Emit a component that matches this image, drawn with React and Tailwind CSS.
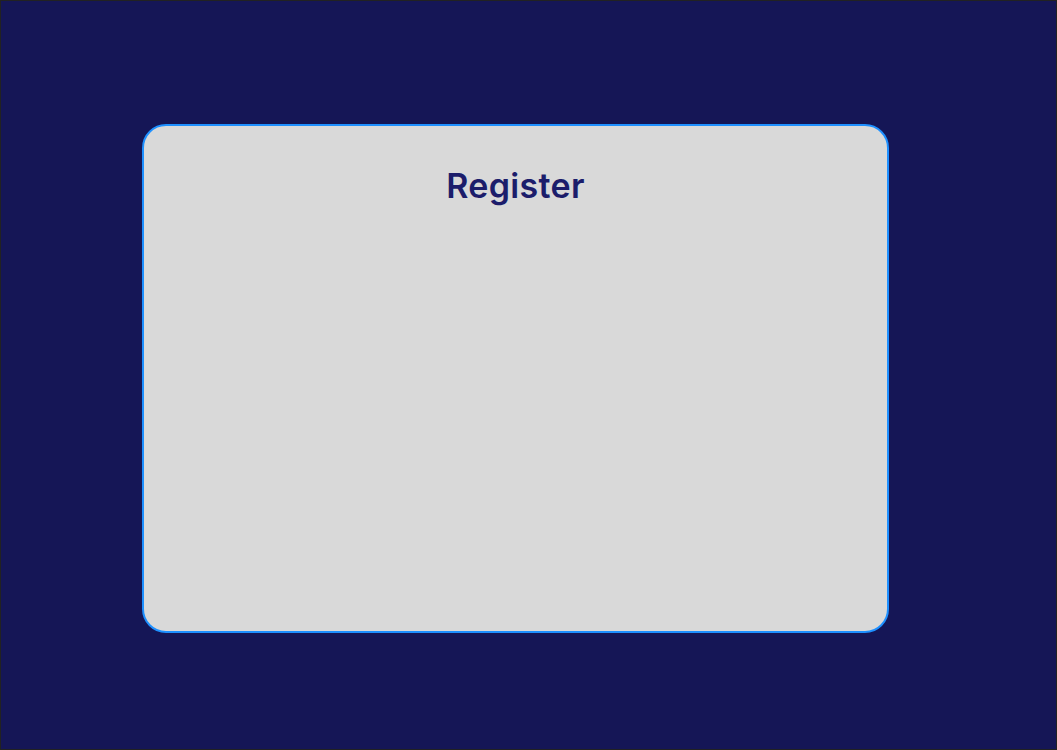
export default function App() {
  return (
    <div className="w-[1057px] h-[750px] bg-[#151656] border border-[#222222] pt-[123px] pl-[141px]" style={{ fontFamily: 'Inter, "Noto Sans", sans-serif' }}>
      <div className="w-[747px] h-[509px] bg-[#d9d9d9] border-2 border-[#1e90ff] rounded-[24px] flex flex-col items-center pt-[40px]">
        <h1 className="text-[34px] leading-[40px] font-semibold tracking-[0.3px] text-[#1c1d6b]">Register</h1>
      </div>
    </div>
  );
}
